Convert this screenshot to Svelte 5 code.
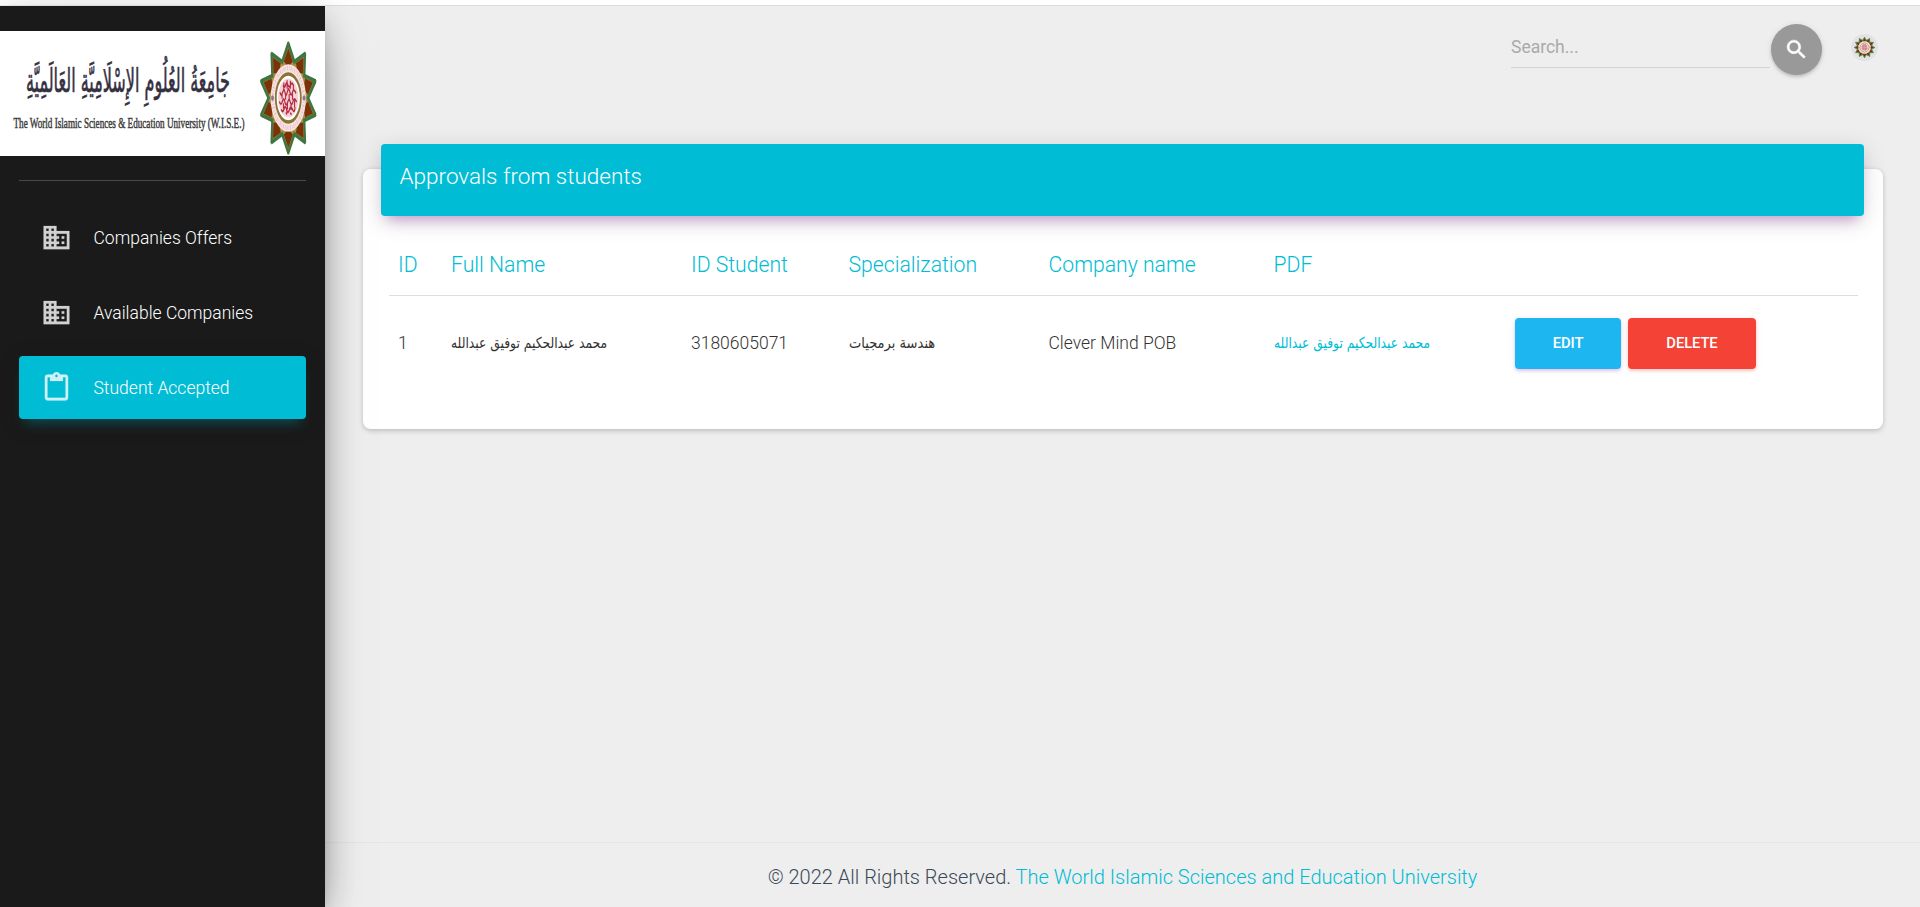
<script>
  const domain =
    'M12 7V3H2v18h20V7H12zM6 19H4v-2h2v2zm0-4H4v-2h2v2zm0-4H4V9h2v2zm0-4H4V5h2v2zm4 12H8v-2h2v2zm0-4H8v-2h2v2zm0-4H8V9h2v2zm0-4H8V5h2v2zm10 12h-8v-2h2v-2h-2v-2h2v-2h-2V9h8v10zm-2-8h-2v2h2v-2zm0 4h-2v2h2v-2z';
  const clipboard =
    'M19 2h-4.18C14.4.84 13.3 0 12 0c-1.3 0-2.4.84-2.82 2H5c-1.1 0-2 .9-2 2v16c0 1.1.9 2 2 2h14c1.1 0 2-.9 2-2V4c0-1.1-.9-2-2-2zm-7 0c.55 0 1 .45 1 1s-.45 1-1 1-1-.45-1-1 .45-1 1-1zm7 18H5V4h2v3h10V4h2v16z';

  const menu = [
    { label: 'Companies Offers', icon: domain, active: false },
    { label: 'Available Companies', icon: domain, active: false },
    { label: 'Student Accepted', icon: clipboard, active: true }
  ];
  const headers = ['ID', 'Full Name', 'ID Student', 'Specialization', 'Company name', 'PDF', ''];

  function star(n, outer, inner) {
    const pts = [];
    for (let i = 0; i < n * 2; i++) {
      const r = i % 2 ? inner : outer;
      const a = (Math.PI * i) / n;
      pts.push(`${(r * Math.sin(a)).toFixed(2)},${(-r * Math.cos(a)).toFixed(2)}`);
    }
    return pts.join(' ');
  }
</script>

{#snippet emblem(n)}
  <polygon points={star(n, 100, 67)} fill="#4f7f43" />
  <polygon points={star(n, 88, 61)} fill="#b08f48" />
  {#each Array(n) as _, i}
    <path d="M0-87L15-64L0-54L-15-64Z" fill="#7c3208" transform="rotate({(360 / n) * i})" />
    <path d="M0-97L-22-62M0-97L22-62" stroke="#3f7540" stroke-width="6" transform="rotate({(360 / n) * i})" />
  {/each}
  <circle r="59" fill="#f7e6e5" />
  <circle r="52" fill="none" stroke="#e2a5ab" stroke-width="8" stroke-dasharray="4 3 2 3" opacity=".5" />
  <circle r="42" fill="#fff" stroke="#8a7433" stroke-width="6" />
  <circle r="34" fill="#f3d3d6" />
  <path
    d="M-28-10q4 9 9 0t8 1q4 8 8-2t9 2q4 7 8-1t12 2M-30 6q5 9 10 0t9 2q4 8 9-1t9 1q5 7 9-2t12 1M-24 20q5 7 10-1t9 3q5 6 9-2t10 0t9-4M-18-22q5 6 9-1t8 1q5 5 9-1t9 1M-15-27v12M-4-31v15M7-30v14M17-24v12M-21-8v9M-9-7v10M3-7v10M14-8v11M-16 9v10M-3 9v11M9 9v12M21 4v12M-8 25l4 4M6 26l5 3"
    fill="none"
    stroke="#b52a42"
    stroke-width="3.8"
  />
  <circle cx="-53" r="5" fill="#8f7695" />
  <circle cx="53" r="5" fill="#8f7695" />
{/snippet}

<div class="page">
  <aside class="sidebar">
    <svg class="logo" viewBox="0 0 325 125" role="img" aria-label="WISE">
      <rect width="325" height="125" fill="#fff" />
      <g transform="translate(26 61) scale(1 1.95)">
        <text class="script" textLength="204" lengthAdjust="spacingAndGlyphs" direction="ltr">جَامِعَةُ العُلُومِ الإِسْلَامِيَّةِ العَالَمِيَّةِ</text>
      </g>
      <g transform="translate(13.5 97) scale(1 1.5)">
        <text class="name" textLength="231" lengthAdjust="spacingAndGlyphs">The World Islamic Sciences &amp; Education University (W.I.S.E.)</text>
      </g>
      <g transform="translate(288.3 67) scale(.298 .572)">{@render emblem(10)}</g>
    </svg>
    <hr />
    <nav>
      {#each menu as item}
        <a class="item" class:active={item.active}>
          <svg viewBox="0 0 24 24"><path d={item.icon} /></svg>
          <span>{item.label}</span>
        </a>
      {/each}
    </nav>
  </aside>

  <div class="main">
    <header>
      <div class="search">Search...</div>
      <button class="round" aria-label="search">
        <svg viewBox="0 0 24 24"><path d="M15.5 14h-.79l-.28-.27C15.41 12.59 16 11.11 16 9.5 16 5.91 13.09 3 9.5 3S3 5.91 3 9.5 5.91 16 9.5 16c1.61 0 3.09-.59 4.23-1.57l.27.28v.79l5 4.99L20.49 19l-4.99-5zm-6 0C7.01 14 5 11.99 5 9.5S7.01 5 9.5 5 14 7.01 14 9.5 11.99 14 9.5 14z" /></svg>
      </button>
      <svg class="avatar" viewBox="-128 -128 256 256">
        <circle r="128" fill="#e2e2e2" />
        {@render emblem(12)}
      </svg>
    </header>

    <section class="card">
      <div class="card-header"><h4>Approvals from students</h4></div>
      <div class="table">
        <div class="row head">
          {#each headers as h}<div>{h}</div>{/each}
        </div>
        <div class="row">
          <div>1</div>
          <div><span class="ar">محمد عبدالحكيم توفيق عبدالله</span></div>
          <div>3180605071</div>
          <div><span class="ar major">هندسة برمجيات</span></div>
          <div>Clever Mind POB</div>
          <div><a class="ar link">محمد عبدالحكيم توفيق عبدالله</a></div>
          <div class="actions">
            <button class="btn edit">EDIT</button>
            <button class="btn delete">DELETE</button>
          </div>
        </div>
      </div>
    </section>

    <footer>© 2022 All Rights Reserved. <a>The World Islamic Sciences and Education University</a></footer>
  </div>
</div>

<style>
  :global(body) {
    background: #fff;
    font-family: Roboto, 'Liberation Sans', sans-serif;
    overflow: hidden;
  }
  .page {
    display: flex;
    box-sizing: border-box;
    height: 907px;
    margin: 0;
    border-top: 5px solid #fff;
    background: #eee;
  }
  .sidebar {
    position: relative;
    z-index: 2;
    width: 325px;
    flex: none;
    box-sizing: border-box;
    padding-top: 25px;
    margin-top: 1px;
    background: #1a1a1a;
    box-shadow: 0 20px 47.5px -15px rgba(0, 0, 0, 0.56), 0 5px 31px 0 rgba(0, 0, 0, 0.12), 0 10px 12.5px -6px rgba(0, 0, 0, 0.2);
  }
  .logo {
    display: block;
    width: 325px;
    height: 125px;
  }
  .script {
    font-family: 'DejaVu Sans', sans-serif;
    font-size: 17px;
    fill: #34303f;
    stroke: #34303f;
    stroke-width: 0.35px;
  }
  .name {
    font-family: 'Liberation Serif', serif;
    font-size: 9.4px;
    fill: #3a3a3a;
    stroke: #3a3a3a;
    stroke-width: 0.3px;
  }
  hr {
    height: 1px;
    margin: 24px 19px 0;
    border: 0;
    background: #484848;
  }
  nav {
    display: flex;
    flex-direction: column;
    gap: 12px;
    padding: 25px 19px 0;
  }
  .item {
    display: flex;
    align-items: center;
    height: 63px;
    padding-left: 22px;
    border-radius: 4px;
    color: #fff;
    font-size: 17.5px;
    font-weight: 300;
    white-space: nowrap;
  }
  .item svg {
    width: 31px;
    height: 31px;
    margin: -1px 21.5px 0 0;
    fill: #fff;
    stroke: #fff;
    stroke-width: 0.15;
    opacity: 0.8;
  }
  .active {
    background: #00bcd4;
    box-shadow: 0 5px 25px 0 rgba(0, 0, 0, 0.14), 0 9px 12.5px -6px rgba(0, 188, 212, 0.4);
  }
  .main {
    flex: 1;
    display: flex;
    flex-direction: column;
    min-width: 0;
    border-top: 1px solid #dcdcdc;
  }
  header {
    display: flex;
    justify-content: flex-end;
    height: 163px;
    box-sizing: border-box;
    padding: 18px 42px 0 0;
  }
  .search {
    width: 259px;
    height: 44px;
    line-height: 46px;
    box-sizing: border-box;
    border-bottom: 1px solid #d4d4d4;
    color: #aaa;
    font-size: 17.5px;
    margin-right: 1px;
  }
  .round {
    display: flex;
    align-items: center;
    justify-content: center;
    width: 51px;
    height: 51px;
    padding: 0;
    border: 0;
    border-radius: 50%;
    background: #999;
    box-shadow: 0 2px 3px rgba(0, 0, 0, 0.14), 0 1px 6px rgba(0, 0, 0, 0.1);
  }
  .round svg {
    width: 25px;
    height: 25px;
    fill: #fff;
    stroke: #fff;
    stroke-width: 0.5;
  }
  .avatar {
    width: 27px;
    height: 27px;
    margin: 10px 0 0 29px;
  }
  .card {
    height: 260px;
    margin: 0 37px 0 38px;
    box-sizing: border-box;
    padding: 0 19px 0 18px;
    border-radius: 7.5px;
    background: #fff;
    box-shadow: 0 1.5px 5px rgba(0, 0, 0, 0.2);
  }
  .card-header {
    height: 72px;
    margin-top: -25px;
    box-sizing: border-box;
    padding: 17px 18.5px;
    border-radius: 4px;
    background: #00bcd4;
    box-shadow: 0 5px 25px 0 rgba(0, 0, 0, 0.14), 0 9px 12.5px -6px rgba(156, 39, 176, 0.4);
  }
  h4 {
    margin: 0;
    color: #fff;
    font-size: 22.5px;
    font-weight: 300;
    line-height: 31.5px;
  }
  .table {
    margin: 0 6px 0 8px;
  }
  .row {
    display: grid;
    grid-template-columns: 53px 240px 157.5px 200px 225px 241.5px 1fr;
    align-items: center;
    height: 94px;
    color: #333;
    font-size: 17.5px;
    font-weight: 300;
    white-space: nowrap;
  }
  .row > div {
    padding-left: 9px;
  }
  .head {
    height: 80px;
    box-sizing: border-box;
    padding-top: 18px;
    border-bottom: 1px solid #dcdfdf;
    color: #00bcd4;
    font-size: 21.2px;
  }
  .ar {
    display: inline-block;
    margin-bottom: 3px;
    font-family: 'DejaVu Sans', sans-serif;
    font-size: 15px;
    font-weight: 400;
    transform: scaleX(0.82);
    transform-origin: left;
  }
  .major {
    transform: scaleX(0.87);
  }
  .link {
    color: #00bcd4;
  }
  .actions {
    display: flex;
    gap: 7px;
  }
  .btn {
    height: 51px;
    padding: 0;
    border: 0;
    border-radius: 4px;
    color: #fff;
    font-family: Roboto, sans-serif;
    font-size: 14.8px;
    font-weight: 500;
    letter-spacing: -0.1px;
  }
  .edit {
    width: 106px;
    background: #1eb6f1;
    box-shadow: 0 2px 3px rgba(156, 39, 176, 0.2), 0 1px 6px rgba(156, 39, 176, 0.12);
  }
  .delete {
    width: 128px;
    background: #f44336;
    box-shadow: 0 2px 3px rgba(244, 67, 54, 0.2), 0 1px 6px rgba(244, 67, 54, 0.12);
  }
  footer {
    height: 65px;
    margin-top: auto;
    box-sizing: border-box;
    border-top: 1px solid #e6e6e6;
    color: #3c4858;
    font-size: 20px;
    font-weight: 300;
    line-height: 69px;
    text-align: center;
  }
  footer a {
    color: #00bcd4;
  }
</style>
